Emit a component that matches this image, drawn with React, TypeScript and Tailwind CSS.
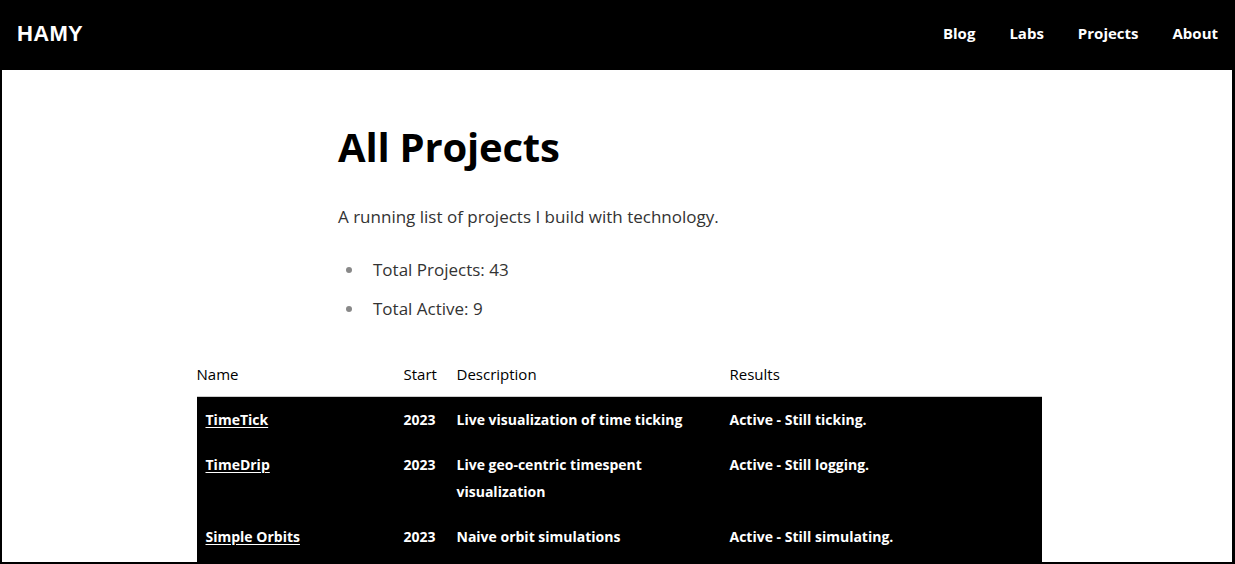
import React from "react";

const rows = [
  { name: "TimeTick", start: "2023", desc: ["Live visualization of time ticking"], res: "Active - Still ticking." },
  { name: "TimeDrip", start: "2023", desc: ["Live geo-centric timespent", "visualization"], res: "Active - Still logging." },
  { name: "Simple Orbits", start: "2023", desc: ["Naive orbit simulations"], res: "Active - Still simulating." },
];

export default function App() {
  return (
    <div className="h-[564px] w-[1235px] overflow-hidden border-l-2 border-r-[3px] border-b-2 border-black bg-white font-['Open_Sans',sans-serif]">
      <header className="flex h-[70px] items-center justify-between bg-black pb-[4px] pl-[15px] pr-[14px] text-white">
        <div className="font-['Liberation_Sans',sans-serif] text-[22px] font-bold tracking-[0.3px]">HAMY</div>
        <nav className="flex items-center gap-[34px] text-[15px] font-bold">
          <span>Blog</span>
          <span>Labs</span>
          <span>Projects</span>
          <span>About</span>
        </nav>
      </header>
      <main className="flex flex-col items-center">
        <div className="w-[560px] pl-[1px]">
          <h1 className="mt-[51px] text-[40px] font-bold leading-[52px] tracking-[-0.2px] text-black">All Projects</h1>
          <p className="mt-[31px] text-[17px] leading-[26px] text-[#333]">A running list of projects I build with technology.</p>
          <ul className="mt-[27px] text-[17px] text-[#333]">
            <li className="flex items-center leading-[26px]">
              <span className="ml-[8px] mr-[21px] h-[6px] w-[6px] rounded-full bg-[#888]" />
              Total Projects: 43
            </li>
            <li className="mt-[13px] flex items-center leading-[26px]">
              <span className="ml-[8px] mr-[21px] h-[6px] w-[6px] rounded-full bg-[#888]" />
              Total Active: 9
            </li>
          </ul>
        </div>
        <table className="ml-[4px] mt-[29px] w-[845px] table-fixed border-collapse text-[14px]">
          <colgroup>
            <col className="w-[198px]" />
            <col className="w-[53px]" />
            <col className="w-[273px]" />
            <col className="w-[321px]" />
          </colgroup>
          <thead>
            <tr className="border-b border-[#ccc] text-left text-[15px] text-black">
              <th className="pb-[8px] pt-[10px] pl-0 font-medium leading-[27px]">Name</th>
              <th className="px-[9px] pb-[8px] pt-[10px] font-medium leading-[27px]">Start</th>
              <th className="px-[9px] pb-[8px] pt-[10px] font-medium leading-[27px]">Description</th>
              <th className="px-[9px] pb-[8px] pt-[10px] font-medium leading-[27px]">Results</th>
            </tr>
          </thead>
          <tbody className="bg-black font-bold text-white">
            {rows.map((r) => (
              <tr key={r.name} className="align-top">
                <td className="px-[9px] py-[9px] leading-[27px]"><span className="underline underline-offset-2">{r.name}</span></td>
                <td className="px-[9px] py-[9px] leading-[27px]">{r.start}</td>
                <td className="px-[9px] py-[9px] leading-[27px]">
                  {r.desc.map((d, i) => (
                    <React.Fragment key={i}>{i > 0 && <br />}{d}</React.Fragment>
                  ))}
                </td>
                <td className="px-[9px] py-[9px] leading-[27px]">{r.res}</td>
              </tr>
            ))}
            <tr>
              <td colSpan={4} className="h-[40px]" />
            </tr>
          </tbody>
        </table>
      </main>
    </div>
  );
}
